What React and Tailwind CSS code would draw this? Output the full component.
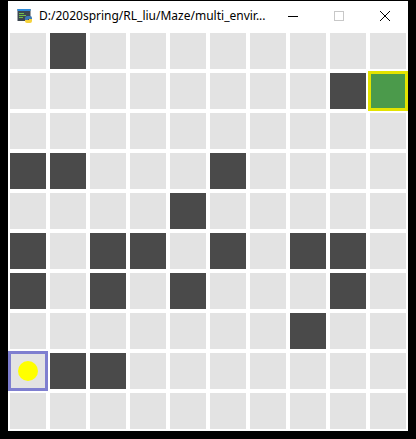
import React from 'react';

// maze layout: 0 = floor, 1 = wall, 2 = goal, 3 = start
const MAZE = [
  [0, 1, 0, 0, 0, 0, 0, 0, 0, 0],
  [0, 0, 0, 0, 0, 0, 0, 0, 1, 2],
  [0, 0, 0, 0, 0, 0, 0, 0, 0, 0],
  [1, 1, 0, 0, 0, 1, 0, 0, 0, 0],
  [0, 0, 0, 0, 1, 0, 0, 0, 0, 0],
  [1, 0, 1, 1, 0, 1, 0, 1, 1, 0],
  [1, 0, 1, 0, 1, 0, 0, 0, 1, 0],
  [0, 0, 0, 0, 0, 0, 0, 1, 0, 0],
  [3, 1, 1, 0, 0, 0, 0, 0, 0, 0],
  [0, 0, 0, 0, 0, 0, 0, 0, 0, 0],
];

const IdleIcon = () => (
  <svg width="16" height="16" viewBox="0 0 16 16" className="shrink-0">
    <rect x="0.5" y="1" width="13" height="12" fill="#3c4650" />
    <rect x="0.5" y="1" width="13" height="2" fill="#2f8bd8" />
    <rect x="2" y="5" width="5" height="1" fill="#6fbf4a" />
    <rect x="2" y="7" width="7" height="1" fill="#6fbf4a" />
    <rect x="2" y="9" width="4" height="1" fill="#6fbf4a" />
    <path d="M10 8 h3 a2 2 0 0 1 2 2 v1 h-4 v1 h-3 v-2 a2 2 0 0 1 2 -2z" fill="#3c78b4" />
    <path d="M8 12 h4 v-1 h3 v2 a2 2 0 0 1 -2 2 h-3 a2 2 0 0 1 -2 -2z" fill="#f5d23c" />
  </svg>
);

const Cell = ({ type }) => {
  if (type === 1) return <div className="w-[36px] h-[36px] bg-[#4a4a4a]" />;
  if (type === 2)
    return <div className="w-[36px] h-[36px] bg-[#4b9a4b] outline-[3px] outline-solid outline-[#e3e300] -outline-offset-1" />;
  if (type === 3)
    return (
      <div className="w-[36px] h-[36px] bg-[#e3e3e3] outline-[3px] outline-solid outline-[#7f7fd0] -outline-offset-1 flex items-center justify-center">
        <div className="w-[20px] h-[20px] rounded-full bg-[#ffff00]" />
      </div>
    );
  return <div className="w-[36px] h-[36px] bg-[#e3e3e3]" />;
};

export default function App() {
  return (
    <div className="w-[416px] h-[439px] bg-black pt-[1px] pl-[8px] overflow-hidden">
      <div className="w-[400px] bg-white">
        {/* title bar */}
        <div className="h-[30px] flex items-center pl-[9px] font-['Noto_Sans',sans-serif] text-[12px] text-black">
          <IdleIcon />
          <span className="ml-[6px] leading-none">D:/2020spring/RL_liu/Maze/multi_envir...</span>
          <div className="ml-auto flex items-center h-full">
            <div className="w-[46px] h-full flex items-center justify-center">
              <div className="w-[10px] h-px bg-black" />
            </div>
            <div className="w-[46px] h-full flex items-center justify-center">
              <div className="w-[10px] h-[10px] border border-[#c8c8c8]" />
            </div>
            <div className="w-[46px] h-full flex items-center justify-center">
              <svg width="12" height="12" viewBox="0 0 12 12">
                <path d="M1 1 L11 11 M11 1 L1 11" stroke="#000" strokeWidth="1" />
              </svg>
            </div>
          </div>
        </div>
        {/* maze canvas */}
        <div className="w-[400px] h-[400px] p-[2px] grid grid-cols-10 gap-[4px] content-start">
          {MAZE.flat().map((t, i) => (
            <Cell key={i} type={t} />
          ))}
        </div>
      </div>
    </div>
  );
}
